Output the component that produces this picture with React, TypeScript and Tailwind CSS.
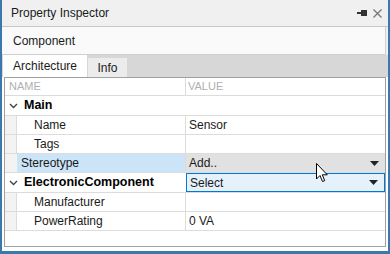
import React from 'react';

const font = { fontFamily: '"Liberation Sans", Arial, sans-serif' };

function Caret() {
  return (
    <svg width="9" height="5" viewBox="0 0 9 5" className="shrink-0">
      <path d="M0 0 H9 L4.5 5 Z" fill="#222" />
    </svg>
  );
}

function Chevron() {
  return (
    <svg width="9" height="6" viewBox="0 0 9 6" className="shrink-0">
      <path d="M1 1 L4.5 4.5 L8 1" fill="none" stroke="#444" strokeWidth="1.4" />
    </svg>
  );
}

function Row({ name, value }: { name: string; value?: string }) {
  return (
    <div className="flex h-[19px] border-b border-[#dcdcdc]">
      <div className="w-[12px] bg-[#f3f3f3] border-r border-[#dcdcdc]" />
      <div className="w-[169px] flex items-center border-r border-[#dcdcdc] pl-[17px]">{name}</div>
      <div className="flex-1 flex items-center pl-[3px]">{value}</div>
    </div>
  );
}

function Group({ name, children }: { name: string; children?: React.ReactNode }) {
  return (
    <div className="flex h-[20px] border-b border-[#dcdcdc]">
      <div className="w-[181px] flex items-center pl-[4px] gap-[6px] font-bold text-[12.5px] text-black">
        <Chevron />
        {name}
      </div>
      <div className="flex-1 flex">{children}</div>
    </div>
  );
}

export default function App() {
  return (
    <div className="relative w-[390px] h-[254px] bg-[#3a78ad] pl-[2px] pr-[2px] pb-[3px]" style={font}>
      <div className="h-full bg-[#f0f0f0] flex flex-col text-[12px] text-[#1a1a1a]">
        <div className="h-[27px] flex items-center justify-between pl-[9px] pr-[6px] border-b border-[#c8c8c8]">
          <span>Property Inspector</span>
          <div className="flex items-center gap-[6px]">
            <svg width="10" height="6" viewBox="0 0 10 6">
              <rect x="4" y="0" width="6" height="6" fill="#333" />
              <rect x="0" y="2" width="5" height="2" fill="#333" />
            </svg>
            <svg width="9" height="9" viewBox="0 0 9 9">
              <path d="M0.5 0.5 L8.5 8.5 M8.5 0.5 L0.5 8.5" stroke="#777" strokeWidth="1.3" />
            </svg>
          </div>
        </div>
        <div className="h-[28px] flex items-center pl-[11px] bg-[#fafafa] border-b border-r border-[#d0d0d0] mr-[2px]">
          Component
        </div>
        <div className="h-[22px] bg-[#d7d7d7] flex items-end pl-[1px]">
          <div className="h-[22px] w-[84px] bg-white flex items-center justify-center">Architecture</div>
          <div className="h-[19px] w-[39px] ml-[1px] bg-[#ececec] flex items-center justify-center">Info</div>
        </div>
        <div className="flex-1 bg-white px-[2px] pb-[4px]">
          <div className="h-full border border-[#a0a0a0] flex flex-col bg-white">
            <div className="flex h-[18px] border-b border-[#dcdcdc] text-[#b0b0b0] text-[11px]">
              <div className="w-[181px] flex items-center pl-[4px] border-r border-[#dcdcdc]">NAME</div>
              <div className="flex-1 flex items-center pl-[2px]">VALUE</div>
            </div>
            <Group name="Main" />
            <Row name="Name" value="Sensor" />
            <Row name="Tags" />
            <div className="flex h-[19px] border-b border-[#dcdcdc]">
              <div className="w-[12px] bg-[#f3f3f3]" />
              <div className="w-[169px] flex items-center pl-[4px] bg-[#cce4f7] border-r border-[#dcdcdc]">Stereotype</div>
              <div className="flex-1 flex items-center justify-between pl-[3px] pr-[6px] bg-[#e1e1e1]">
                <span>Add..</span>
                <Caret />
              </div>
            </div>
            <Group name="ElectronicComponent">
              <div className="flex-1 flex items-center justify-between pl-[3px] pr-[6px] bg-[#e5f1fb] border border-[#0078d7] font-normal text-[12px]">
                <span>Select</span>
                <Caret />
              </div>
            </Group>
            <Row name="Manufacturer" />
            <Row name="PowerRating" value="0 VA" />
          </div>
        </div>
      </div>
      <svg className="absolute left-[316px] top-[163px]" width="13" height="20" viewBox="0 0 13 20">
        <path d="M0.5 0.5 V16 L4 12.5 L6.5 18.5 L8.7 17.6 L6.3 11.8 H11.3 Z" fill="#fff" stroke="#000" strokeWidth="1" strokeLinejoin="round" />
      </svg>
    </div>
  );
}
